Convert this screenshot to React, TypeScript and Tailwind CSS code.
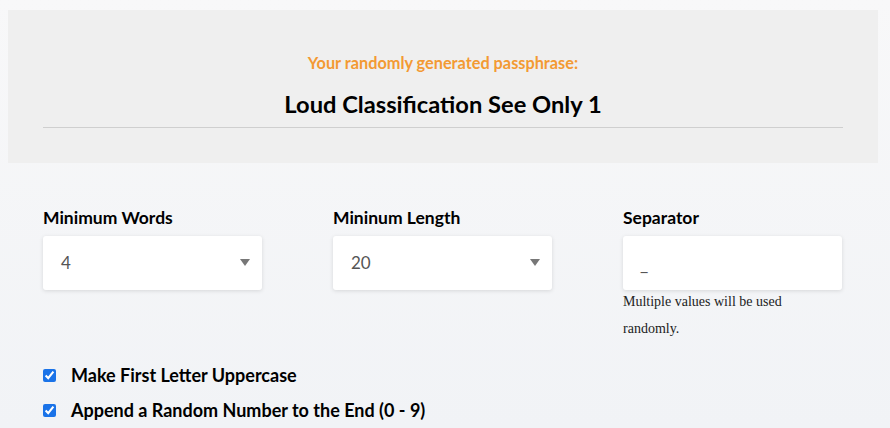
import React from "react";

function SelectBox({ value }: { value: string }) {
  return (
    <div className="flex h-[54px] w-full items-center justify-between rounded-[3px] bg-white pl-[18px] pr-[12px] shadow-[0_1px_4px_rgba(0,0,0,0.12)]">
      <span className="text-[17px] text-[#555] [font-family:Lato,sans-serif]">{value}</span>
      <svg width="10" height="8" viewBox="0 0 10 8">
        <path d="M0 0 L10 0 L5 7 Z" fill="#777" />
      </svg>
    </div>
  );
}

export default function App() {
  const [upper, setUpper] = React.useState(true);
  const [num, setNum] = React.useState(true);

  return (
    <div className="min-h-[428px] w-full bg-gradient-to-b from-[#f8f8f9] to-[#f1f3f6] pt-[10px] [font-family:Lato,sans-serif]">
      <div className="mx-[8px] mr-[12px] flex h-[153px] flex-col items-center bg-[#efefef] px-[35px] pt-[42px]">
        <p className="text-[16.3px] font-bold leading-[22px] text-[#f39a33]">Your randomly generated passphrase:</p>
        <h1 className="mt-[16px] text-[23.7px] font-bold leading-[28px] text-black">Loud Classification See Only 1</h1>
        <div className="mt-[9px] h-px w-full bg-[#cfcfcf]" />
      </div>

      <div className="mx-[43px] mt-[44px] grid w-[800px] grid-cols-[219px_219px_219px] gap-x-[71px]">
        <div>
          <label className="mb-[7px] block text-[17.5px] font-bold leading-[22px] text-black">Minimum Words</label>
          <SelectBox value="4" />
        </div>
        <div>
          <label className="mb-[7px] block text-[17.5px] font-bold leading-[22px] text-black">Mininum Length</label>
          <SelectBox value="20" />
        </div>
        <div>
          <label className="mb-[7px] block text-[17.5px] font-bold leading-[22px] text-black">Separator</label>
          <div className="flex h-[54px] w-full items-end rounded-[3px] bg-white pb-[16px] pl-[17px] shadow-[0_1px_4px_rgba(0,0,0,0.12)]">
            <span className="text-[18px] leading-[20px] text-[#555]">_</span>
          </div>
          <p className="mt-[-2px] w-[175px] text-[14px] leading-[27px] text-[#222] [font-family:'Liberation_Serif',serif]">
            Multiple values will be used randomly.
          </p>
        </div>
      </div>

      <div className="mx-[43px] mt-[22px] flex flex-col gap-[13px]">
        <label className="flex items-center gap-[15px]">
          <input
            type="checkbox"
            checked={upper}
            onChange={(e) => setUpper(e.target.checked)}
            className="m-0 h-[13px] w-[13px] accent-[#1a73e8]"
          />
          <span className="text-[18px] font-bold leading-[22px] text-black">Make First Letter Uppercase</span>
        </label>
        <label className="flex items-center gap-[15px]">
          <input
            type="checkbox"
            checked={num}
            onChange={(e) => setNum(e.target.checked)}
            className="m-0 h-[13px] w-[13px] accent-[#1a73e8]"
          />
          <span className="text-[18px] font-bold leading-[22px] text-black">Append a Random Number to the End (0 - 9)</span>
        </label>
      </div>
    </div>
  );
}
